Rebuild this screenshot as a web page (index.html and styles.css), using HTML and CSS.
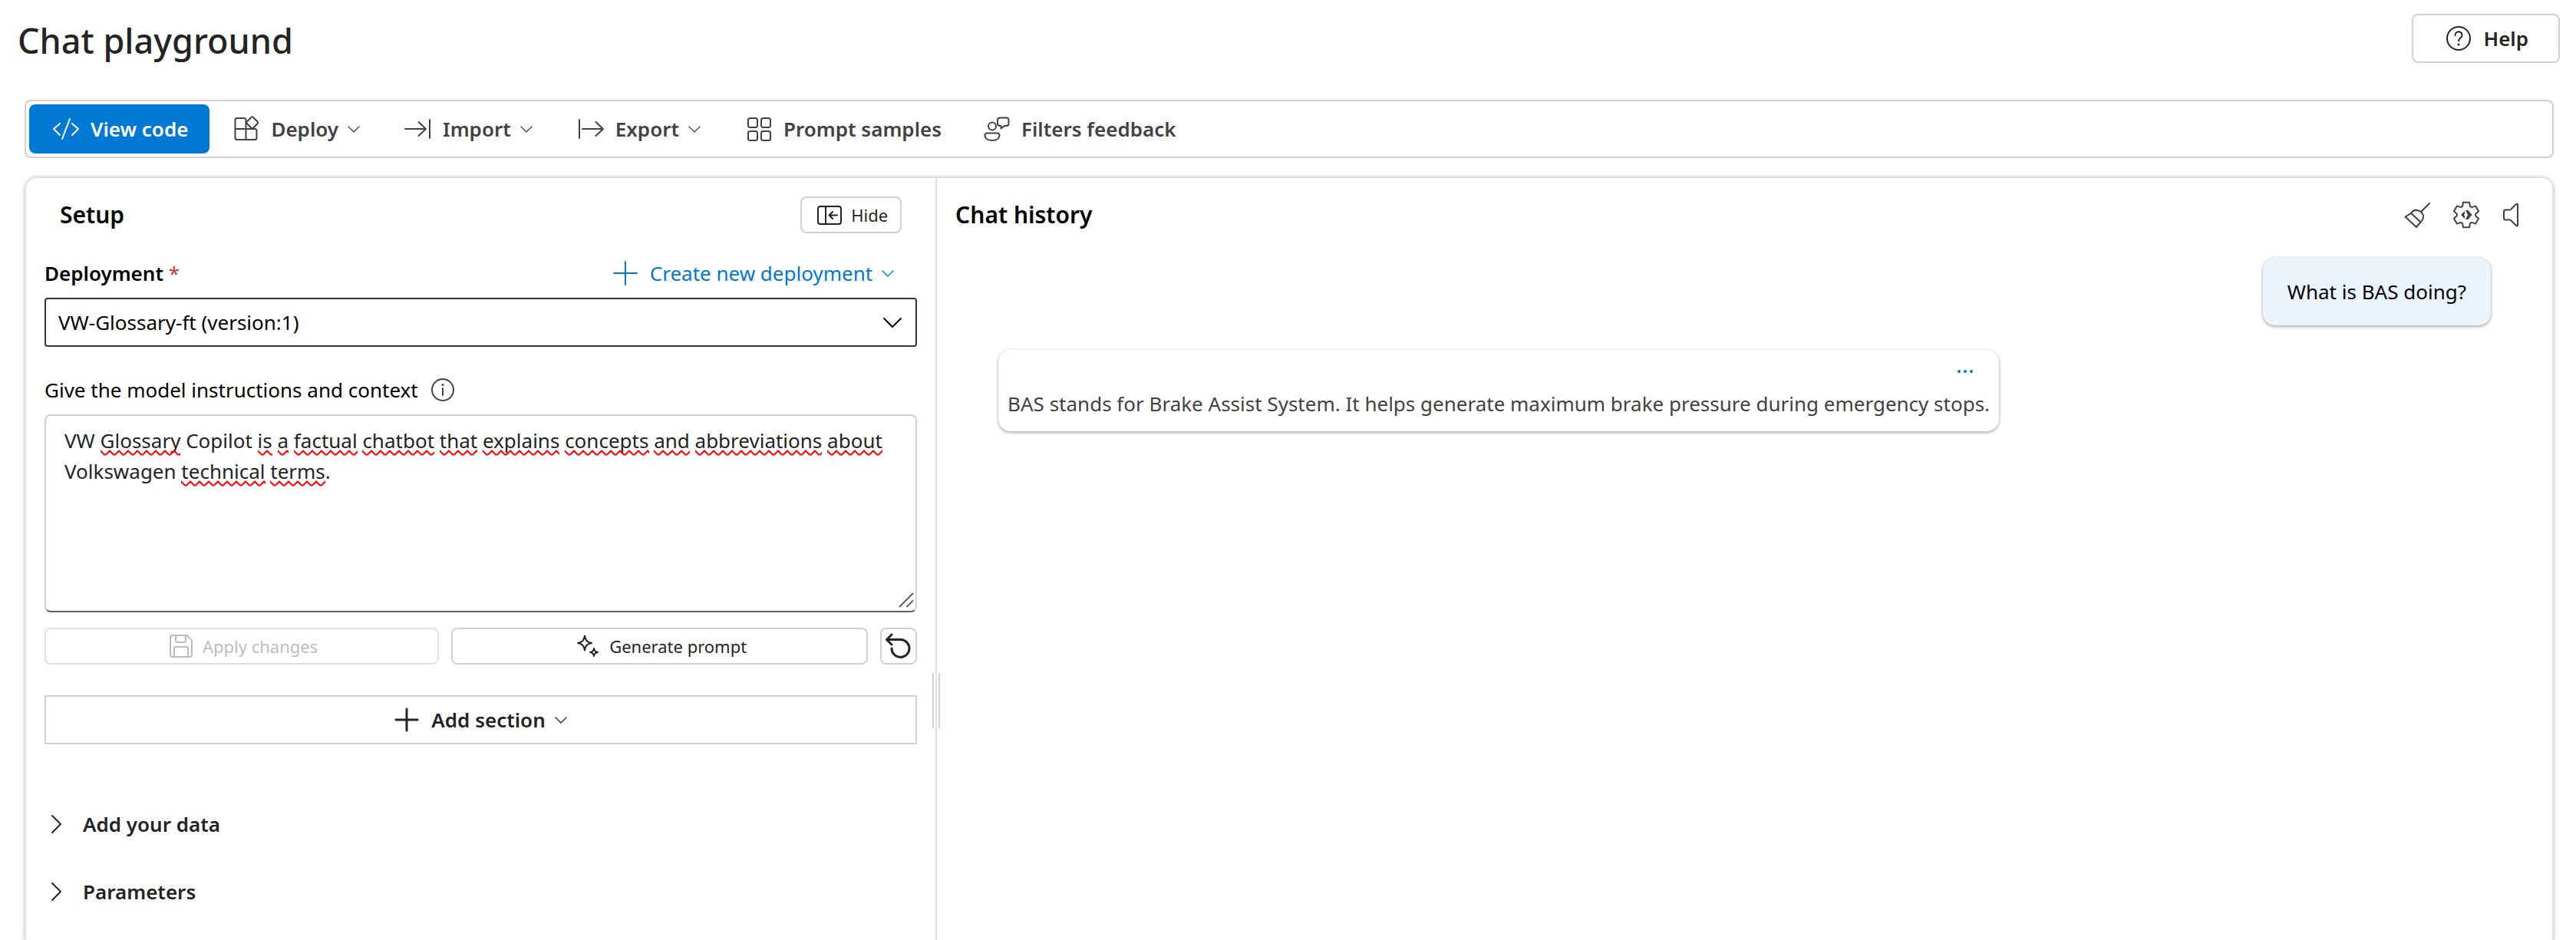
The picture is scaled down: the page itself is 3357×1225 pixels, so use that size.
FILE: index.html
```html
<!DOCTYPE html>
<html lang="en">
<head>
<meta charset="utf-8">
<meta name="viewport" content="width=device-width, initial-scale=1">
<title>Chat playground</title>
<link rel="stylesheet" href="styles.css">
</head>
<body>
<header class="page-header">
  <h1 class="page-title">Chat playground</h1>
  <button class="btn btn-outline btn-help" type="button">
    <svg class="icon" viewBox="0 0 40 40" aria-hidden="true"><circle cx="20" cy="20" r="15"/><path d="M15.500 16a4.500 4.500 0 1 1 7 3.500c-1.700 1.200-2.500 2.200-2.500 4"/><circle class="solid" cx="20" cy="28" r="1.500"/></svg>
    <span>Help</span>
  </button>
</header>

<nav class="toolbar" aria-label="Playground actions">
  <button class="btn btn-primary" type="button">
    <svg class="icon" viewBox="0 0 40 40" aria-hidden="true"><path d="M12 13l-8 7 8 8M25 7L15 33M28 13l8 7-8 8"/></svg>
    <span>View code</span>
  </button>
  <button class="btn" type="button">
    <svg class="icon" viewBox="0 0 40 40" aria-hidden="true"><path d="M19.500 34V8.500A2.500 2.500 0 0 0 17 6H8a2.500 2.500 0 0 0-2.500 2.500v23A2.500 2.500 0 0 0 8 34h23a2.500 2.500 0 0 0 2.500-2.500v-9A2.500 2.500 0 0 0 31 20H5.500"/><path d="M26.600 4.800l-6 6a1.500 1.500 0 0 0 0 2l6 6.200a1.500 1.500 0 0 0 2.200 0l6-6.200a1.500 1.500 0 0 0 0-2l-6-6a1.500 1.500 0 0 0-2.200 0z"/></svg>
    <span>Deploy</span>
    <svg class="chevron" viewBox="0 0 24 24" aria-hidden="true"><path d="M5 9l7 7 7-7"/></svg>
  </button>
  <button class="btn" type="button">
    <svg class="icon" viewBox="0 0 40 40" aria-hidden="true"><path d="M3 20h27M20.500 11l9.500 9-9.500 9M35 8v24"/></svg>
    <span>Import</span>
    <svg class="chevron" viewBox="0 0 24 24" aria-hidden="true"><path d="M5 9l7 7 7-7"/></svg>
  </button>
  <button class="btn" type="button">
    <svg class="icon" viewBox="0 0 40 40" aria-hidden="true"><path d="M5 8v24M9 20h27M26.500 11l9.500 9-9.500 9"/></svg>
    <span>Export</span>
    <svg class="chevron" viewBox="0 0 24 24" aria-hidden="true"><path d="M5 9l7 7 7-7"/></svg>
  </button>
  <button class="btn" type="button">
    <svg class="icon" viewBox="0 0 40 40" aria-hidden="true"><rect x="6" y="6" width="12" height="12" rx="2.500"/><rect x="23" y="6" width="12" height="12" rx="2.500"/><rect x="6" y="23" width="12" height="12" rx="2.500"/><rect x="23" y="23" width="12" height="12" rx="2.500"/></svg>
    <span>Prompt samples</span>
  </button>
  <button class="btn" type="button">
    <svg class="icon" viewBox="0 0 40 40" aria-hidden="true"><circle cx="14" cy="16.500" r="5"/><path d="M7 25.500h14a2.500 2.500 0 0 1 2.500 2.500c0 4.500-4 7-9.500 7S4.500 32.500 4.500 28A2.500 2.500 0 0 1 7 25.500z"/><path d="M24 5.500h8.500a3 3 0 0 1 3 3V13a3 3 0 0 1-3 3h-2.500l-4.500 3.500V16H24a3 3 0 0 1-3-3V8.500a3 3 0 0 1 3-3z"/></svg>
    <span>Filters feedback</span>
  </button>
</nav>

<main class="workspace">
  <section class="setup" aria-labelledby="setup-title">
    <div class="setup-header">
      <h2 class="panel-title" id="setup-title">Setup</h2>
      <button class="btn btn-small btn-outline" type="button">
        <svg class="icon" viewBox="0 0 40 40" aria-hidden="true"><rect x="5" y="9" width="30" height="23" rx="3"/><path d="M15 9v23M19.500 20.500H30M24 16l-4.500 4.500L24 25"/></svg>
        <span>Hide</span>
      </button>
    </div>

    <div class="field-header">
      <label class="field-label strong" for="deployment">Deployment <span class="required">*</span></label>
      <button class="btn btn-link" type="button">
        <svg class="icon" viewBox="0 0 40 40" aria-hidden="true"><path d="M20 5v30M5 20h30"/></svg>
        <span>Create new deployment</span>
        <svg class="chevron" viewBox="0 0 24 24" aria-hidden="true"><path d="M5 9l7 7 7-7"/></svg>
      </button>
    </div>
    <div class="select-box">
      <select class="select" id="deployment">
        <option>VW-Glossary-ft (version:1)</option>
      </select>
      <svg class="icon select-arrow" viewBox="0 0 40 40" aria-hidden="true"><path d="M9 15l11 11 11-11"/></svg>
    </div>

    <div class="field-header field-header-spaced">
      <label class="field-label" for="instructions">Give the model instructions and context</label>
      <svg class="icon" viewBox="0 0 40 40" role="img" aria-label="Information"><circle cx="20" cy="20" r="14"/><path d="M20 18v9"/><circle class="solid" cx="20" cy="13.500" r="1.500"/></svg>
    </div>
    <div class="prompt-box">
      <textarea class="prompt-text" id="instructions" spellcheck="false">VW Glossary Copilot is a factual chatbot that explains concepts and abbreviations about Volkswagen technical terms.</textarea>
      <div class="prompt-marks" aria-hidden="true">VW <u>Glossary</u> Copilot <u>is</u> <u>a</u> <u>factual</u> <u>chatbot</u> <u>that</u> <u>explains</u> <u>concepts</u> <u>and</u> <u>abbreviations</u> <u>about</u> Volkswagen <u>technical</u> <u>terms</u>.</div>
      <svg class="prompt-grip" viewBox="0 0 20 20" aria-hidden="true"><path d="M1.500 18.500l17-17M11 18.500l7.500-7.500"/></svg>
    </div>

    <div class="prompt-actions">
      <button class="btn btn-small btn-outline btn-grow" type="button" disabled>
        <svg class="icon" viewBox="0 0 40 40" aria-hidden="true"><path d="M9 6h17.500a3 3 0 0 1 2.100.900l4.500 4.500a3 3 0 0 1 .900 2.100V31a3 3 0 0 1-3 3H9a3 3 0 0 1-3-3V9a3 3 0 0 1 3-3zM13 6v7a2 2 0 0 0 2 2h9a2 2 0 0 0 2-2V6M11 34V23a2 2 0 0 1 2-2h14a2 2 0 0 1 2 2v11"/></svg>
        <span>Apply changes</span>
      </button>
      <button class="btn btn-small btn-outline btn-grow" type="button">
        <svg class="icon" viewBox="0 0 40 40" aria-hidden="true"><path d="M16 6.500c1.200 6.500 3 8.300 9 9.500-6 1.200-7.800 3-9 9.500-1.200-6.500-3-8.300-9-9.500 6-1.200 7.800-3 9-9.500zM28 23c.800 3.400 1.600 4.200 5 5-3.400.800-4.200 1.600-5 5-.800-3.400-1.600-4.200-5-5 3.400-.800 4.200-1.600 5-5z"/></svg>
        <span>Generate prompt</span>
      </button>
      <button class="btn btn-small btn-outline btn-square" type="button" aria-label="Reset">
        <svg class="icon icon-bold" viewBox="0 0 40 40" aria-hidden="true"><path d="M11 5l-6.500 6.500L11 18M5 11.500h18A11.500 11.500 0 1 1 11 23"/></svg>
      </button>
    </div>

    <button class="btn btn-section" type="button">
      <svg class="icon icon-bold" viewBox="0 0 40 40" aria-hidden="true"><path d="M20 6v28M6 20h28"/></svg>
      <span>Add section</span>
      <svg class="chevron" viewBox="0 0 24 24" aria-hidden="true"><path d="M5 9l7 7 7-7"/></svg>
    </button>

    <div class="groups">
      <button class="group-toggle" type="button" aria-expanded="false">
        <svg class="group-arrow" viewBox="0 0 32 32" aria-hidden="true"><path d="M10 5l11 11-11 11"/></svg>
        <span>Add your data</span>
      </button>
      <button class="group-toggle" type="button" aria-expanded="false">
        <svg class="group-arrow" viewBox="0 0 32 32" aria-hidden="true"><path d="M10 5l11 11-11 11"/></svg>
        <span>Parameters</span>
      </button>
    </div>

    <div class="splitter" role="separator" aria-orientation="vertical"></div>
  </section>

  <section class="chat" aria-labelledby="chat-title">
    <div class="chat-header">
      <h2 class="panel-title" id="chat-title">Chat history</h2>
      <div class="chat-tools">
        <button class="icon-btn" type="button" aria-label="Clear chat">
          <svg class="icon" viewBox="0 0 40 40" aria-hidden="true"><path d="M36 5L25.500 15.500M4.500 22.500L12 17.800c2-3 5-4.300 8-3.800 5.500.800 8.500 5 8 9.500-.300 2.500-1.500 4.500-3.500 6L19 36zM12 17.800l12.500 11.700"/></svg>
        </button>
        <button class="icon-btn" type="button" aria-label="Chat settings">
          <svg class="icon" viewBox="0 0 40 40" aria-hidden="true"><path d="M16 3.700h8l1 5.100 2.200 1.300 4.900-1.700 4 6.900-3.900 3.400v2.600l3.900 3.400-4 6.900-4.900-1.700-2.200 1.300-1 5.100h-8l-1-5.100-2.200-1.300-4.900 1.700-4-6.900 3.900-3.400v-2.600l-3.900-3.400 4-6.900 4.900 1.700L15 8.800z"/><path class="solid" d="M13 20l5-5v3.500L17 20l1 1.500V25zM19 14h3.500l5 6-5 6H19l3-6z"/></svg>
        </button>
        <button class="icon-btn" type="button" aria-label="Speaker">
          <svg class="icon" viewBox="0 0 40 40" aria-hidden="true"><path d="M5 15.500A2 2 0 0 1 7 13.500h5.500a2 2 0 0 0 1.400-.500l7.600-7.200c.700-.600 1.500-.300 1.500.700v27c0 1-.800 1.300-1.500.700L13.900 27a2 2 0 0 0-1.400-.500H7a2 2 0 0 1-2-2z"/></svg>
        </button>
      </div>
    </div>
    <div class="messages">
      <p class="message message-user">What is BAS doing?</p>
      <article class="message message-bot">
        <button class="icon-btn more" type="button" aria-label="More options">
          <svg class="icon" viewBox="0 0 40 40" aria-hidden="true"><circle class="solid" cx="12" cy="20" r="2"/><circle class="solid" cx="20" cy="20" r="2"/><circle class="solid" cx="28" cy="20" r="2"/></svg>
        </button>
        <p class="message-text">BAS stands for Brake Assist System. It helps generate maximum brake pressure during emergency stops.</p>
      </article>
    </div>
  </section>
</main>
</body>
</html>
```
FILE: styles.css
```css
:root {
  --text: #242424;
  --text-soft: #424242;
  --line: #d1d1d1;
  --line-soft: #e0e0e0;
  --brand: #0078d4;
}

* {
  box-sizing: border-box;
}

body {
  display: flex;
  flex-direction: column;
  min-height: 100vh;
  margin: 0;
  background: #fff;
  color: var(--text);
  font-family: "Noto Sans", "Open Sans", sans-serif;
  font-size: 26px;
  line-height: 40px;
}

h1, h2, p {
  margin: 0;
}

button, select, textarea {
  margin: 0;
  font: inherit;
  color: inherit;
}

/* Icons */
.icon, .chevron, .group-arrow, .prompt-grip {
  flex: none;
  fill: none;
  stroke: currentColor;
  stroke-width: 2;
  stroke-linecap: round;
  stroke-linejoin: round;
}

.icon {
  width: 40px;
  height: 40px;
}

.icon-bold {
  stroke-width: 3;
}

.chevron {
  width: 24px;
  height: 24px;
  margin-left: -4px;
  stroke-width: 1.3;
}

.solid {
  fill: currentColor;
  stroke: none;
}

/* Buttons */
.btn {
  display: inline-flex;
  align-items: center;
  justify-content: center;
  gap: 12px;
  height: 64px;
  padding: 0 26px;
  border: 0;
  border-radius: 8px;
  background: none;
  color: var(--text-soft);
  font-weight: 600;
  white-space: nowrap;
}

.btn-primary {
  margin-right: 2px;
  padding: 0 28px;
  background: var(--brand);
  color: #fff;
}

.btn-outline {
  border: 2px solid var(--line);
  background: #fff;
  color: var(--text);
}

.btn-help {
  padding: 0 39px;
}

.btn-small {
  gap: 8px;
  height: 48px;
  padding: 0 16px;
  font-size: 22px;
  font-weight: 400;
}

.btn-small:disabled {
  border-color: var(--line-soft);
  color: #bdbdbd;
}

.btn-grow {
  flex: 1 1 auto;
}

.btn-square {
  width: 48px;
  padding: 0;
}

.btn-link {
  height: 40px;
  margin-left: auto;
  color: var(--brand);
  font-weight: 400;
}

.btn-section {
  width: 100%;
  margin-top: 40px;
  border: 2px solid var(--line);
  border-radius: 0;
  color: var(--text);
}

.icon-btn {
  display: flex;
  padding: 0;
  border: 0;
  background: none;
  color: var(--text-soft);
}

/* Header and toolbar */
.page-header {
  display: flex;
  align-items: flex-start;
  justify-content: space-between;
  margin-bottom: 42px;
  padding: 18px 21px 0 23px;
}

.page-title {
  font-size: 45px;
  font-weight: 500;
  line-height: 70px;
}

.toolbar {
  display: flex;
  margin: 0 29px 24px 32px;
  padding: 4px;
  border: 2px solid var(--line);
  border-radius: 8px;
}

/* Workspace */
.workspace {
  display: grid;
  grid-template-columns: minmax(0, 9fr) minmax(0, 16fr);
  flex: 1;
  margin: 0 29px 0 32px;
  border: 2px solid var(--line-soft);
  border-bottom: 0;
  border-radius: 16px 16px 0 0;
  box-shadow: 0 0 4px rgba(0, 0, 0, 0.12), 0 4px 8px rgba(0, 0, 0, 0.14);
}

.panel-title {
  color: #000;
  font-size: 30px;
  font-weight: 600;
  line-height: 48px;
}

/* Setup panel */
.setup {
  position: relative;
  padding: 24px 24px 16px;
}

.setup-header {
  display: flex;
  justify-content: space-between;
  padding: 0 20px;
}

.field-header {
  display: flex;
  align-items: center;
  gap: 12px;
  margin: 32px 0 12px;
  color: var(--text-soft);
}

.field-header-spaced {
  margin-top: 36px;
}

.field-label {
  color: #000;
}

.strong {
  font-weight: 600;
}

.required {
  color: #d13438;
  font-weight: 400;
}

.select-box {
  display: grid;
  align-items: center;
}

.select {
  grid-area: 1 / 1;
  width: 100%;
  height: 64px;
  padding: 0 64px 0 16px;
  border: 2px solid #373737;
  border-radius: 4px;
  appearance: none;
  background: #fff;
  color: #000;
}

.select-arrow {
  grid-area: 1 / 1;
  justify-self: end;
  margin-right: 12px;
  color: #000;
  pointer-events: none;
}

.prompt-box {
  position: relative;
}

.prompt-text {
  display: block;
  width: 100%;
  height: 258px;
  padding: 12px 24px;
  border: 2px solid var(--line);
  border-bottom-color: #616161;
  border-radius: 8px;
  background: #fff;
  resize: none;
}

/* Spelling marks laid over the text box, same metrics as the text */
.prompt-marks {
  position: absolute;
  inset: 0;
  padding: 14px 26px;
  color: transparent;
  pointer-events: none;
}

.prompt-marks u {
  padding-bottom: 2px;
  background: url("data:image/svg+xml,%3Csvg xmlns='http://www.w3.org/2000/svg' viewBox='0 0 12 8'%3E%3Cpath d='M-2 -1L0 1.500L5 6.500H7L12 1.500L14 -1' fill='none' stroke='red' stroke-width='2'/%3E%3C/svg%3E") left bottom / 12px 8px repeat-x;
  text-decoration: none;
}

.prompt-grip {
  position: absolute;
  right: 4px;
  bottom: 6px;
  width: 20px;
  height: 20px;
  color: #616161;
}

.prompt-actions {
  display: flex;
  gap: 16px;
  margin-top: 20px;
}

.groups {
  margin-top: 60px;
}

.group-toggle {
  display: flex;
  align-items: center;
  gap: 18px;
  width: 100%;
  height: 88px;
  padding: 0;
  border: 0;
  background: none;
  font-weight: 600;
  text-align: left;
}

.group-arrow {
  width: 32px;
  height: 32px;
}

.splitter {
  position: absolute;
  top: 65%;
  right: -6px;
  width: 10px;
  height: 72px;
  border: solid var(--line);
  border-width: 0 2px;
  cursor: col-resize;
}

/* Chat panel */
.chat {
  padding: 24px 28px 24px 24px;
  border-left: 2px solid var(--line-soft);
}

.chat-header {
  display: flex;
  align-items: center;
  justify-content: space-between;
}

.chat-tools {
  display: flex;
  gap: 24px;
}

.messages {
  display: flex;
  flex-direction: column;
  gap: 32px;
  padding: 32px 52px 0 56px;
}

.message {
  border-radius: 16px;
  background: #fff;
  box-shadow: 0 0 4px rgba(0, 0, 0, 0.12), 0 2px 4px rgba(0, 0, 0, 0.28);
}

.message-user {
  align-self: flex-end;
  padding: 24px 32px;
  background: #ebf3fc;
  color: #000;
}

.message-bot {
  align-self: flex-start;
  display: flex;
  flex-direction: column;
  gap: 2px;
  padding: 8px 12px 16px;
  color: var(--text-soft);
}

.more {
  align-self: flex-end;
  margin-right: 12px;
  color: var(--brand);
}
```
